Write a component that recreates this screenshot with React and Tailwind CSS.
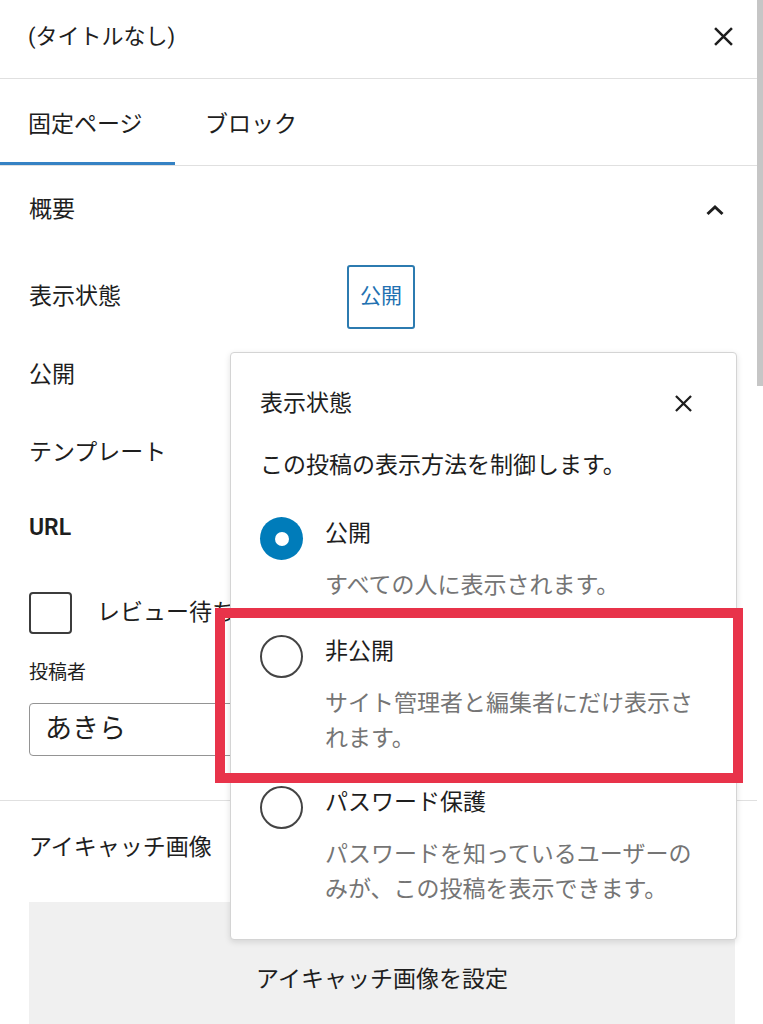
import React from 'react';

const XIcon = ({ size = 18, stroke = 2.4 }) => (
    <svg width={size} height={size} viewBox="0 0 18 18" fill="none">
        <path d="M1 1L17 17M17 1L1 17" stroke="#1e1e1e" strokeWidth={stroke} strokeLinecap="butt" />
    </svg>
);

const ChevronUp = () => (
    <svg width="20" height="12" viewBox="0 0 20 12" fill="none">
        <path d="M2.5 10L10 3L17.5 10" stroke="#1e1e1e" strokeWidth="3" />
    </svg>
);

const Radio = ({ checked }) =>
    checked ? (
        <span className="flex h-[43px] w-[43px] shrink-0 items-center justify-center rounded-full bg-[#007cba]">
            <span className="block h-[14px] w-[14px] rounded-full bg-white" />
        </span>
    ) : (
        <span className="block h-[43px] w-[43px] shrink-0 rounded-full border-2 border-[#444]" />
    );

const Option = ({ label, desc, checked, className = '' }) => (
    <div className={`flex ${className}`}>
        <div className="mt-[1px] shrink-0">
            <Radio checked={checked} />
        </div>
        <div className="ml-[22px] w-[378px] shrink-0">
            <div className="leading-[35px]">{label}</div>
            <div className="mt-[17px] leading-[35px] text-[#757575]">{desc}</div>
        </div>
    </div>
);

const Row = ({ label, h = 'h-[78px]', bold, children }) => (
    <div className={`flex items-center ${h}`}>
        <div className={`w-[318px] shrink-0 ${bold ? 'font-semibold' : ''}`}>{label}</div>
        {children}
    </div>
);

export default function App() {
    return (
        <div className="relative h-[1024px] w-[763px] overflow-hidden bg-white font-['Roboto','Noto_Sans_CJK_JP',sans-serif] text-[23px] text-[#1e1e1e]">
            <div className="w-[757px]">
                {/* header */}
                <div className="flex h-[79px] items-center justify-between border-b border-[#e0e0e0] pb-[5px] pl-[28px] pr-[24px]">
                    <span className="text-[22px]">(タイトルなし)</span>
                    <XIcon size={19} />
                </div>

                {/* tabs */}
                <div className="flex h-[87px] border-b border-[#e0e0e0]">
                    <div className="flex w-[175px] items-center border-b-[3px] border-[#3582c4] pl-[28px] pt-[10px]">固定ページ</div>
                    <div className="flex items-center pl-[30px] pt-[7px]">ブロック</div>
                </div>

                {/* summary panel */}
                <div className="border-b border-[#e0e0e0] pb-[44px] pl-[29px] pr-[22px]">
                    <div className="flex h-[88px] items-center justify-between pr-[10px]">
                        <span>概要</span>
                        <ChevronUp />
                    </div>
                    <div className="mt-[4px]">
                        <Row label="表示状態">
                            <button className="flex h-[64px] w-[68px] items-center justify-center rounded-[3px] border-2 border-[#2c7bb0] text-[21px] text-[#2271b1]">
                                公開
                            </button>
                        </Row>
                        <Row label="公開" />
                        <Row label="テンプレート" />
                        <Row label="URL" h="h-[72px]" bold />
                    </div>
                    <div className="mt-[28px] flex items-center">
                        <span className="h-[42px] w-[43px] rounded-[4px] border-2 border-[#3c3c3c]" />
                        <span className="ml-[25px]">レビュー待ち</span>
                    </div>
                    <div className="mt-[26px] text-[19px] leading-[26px]">投稿者</div>
                    <div className="mt-[17px] flex h-[53px] items-center rounded-[4px] border border-[#949494] pl-[15px] text-[27px]">
                        あきら
                    </div>
                </div>

                {/* featured image */}
                <div className="pl-[29px] pr-[22px]">
                    <div className="flex h-[94px] items-center">アイキャッチ画像</div>
                    <div className="mt-[7px] flex h-[160px] items-center justify-center bg-[#f0f0f0] pb-[4px]">
                        アイキャッチ画像を設定
                    </div>
                </div>
            </div>

            {/* scrollbar */}
            <div className="absolute right-0 top-0 h-[386px] w-[6px] bg-[#c6c6c6]" />

            {/* visibility popover */}
            <div className="absolute left-[230px] top-[352px] w-[507px] rounded-[4px] border border-[#d4d4d4] bg-white pb-[32px] pl-[29px] pr-[44px] pt-[33px] shadow-[0_2px_6px_rgba(0,0,0,0.12)]">
                <div className="flex items-center justify-between">
                    <span className="leading-[35px]">表示状態</span>
                    <XIcon size={17} stroke={2.4} />
                </div>
                <div className="mt-[27px] leading-[35px]">この投稿の表示方法を制御します。</div>
                <Option className="mt-[33px]" checked label="公開" desc="すべての人に表示されます。" />
                <Option className="mt-[31px]" label="非公開" desc="サイト管理者と編集者にだけ表示されます。" />
                <Option className="mt-[29px]" label="パスワード保護" desc="パスワードを知っているユーザーのみが、この投稿を表示できます。" />
            </div>

            {/* highlight annotation */}
            <div className="absolute left-[215px] top-[608px] h-[175px] w-[528px] border-[10px] border-[#e8334a]" />
        </div>
    );
}
